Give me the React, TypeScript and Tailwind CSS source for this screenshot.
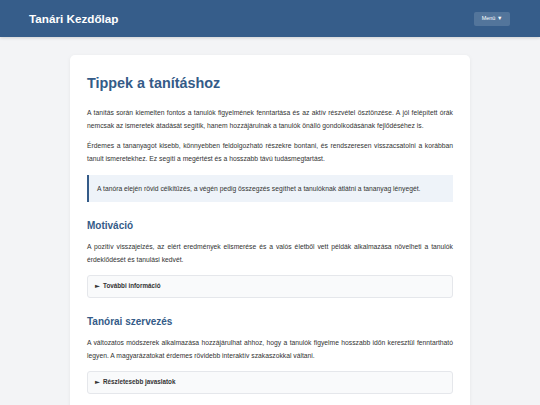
const paragraphs = [
  'A tanítás során kiemelten fontos a tanulók figyelmének fenntartása és az aktív részvétel ösztönzése. A jól felépített órák nemcsak az ismeretek átadását segítik, hanem hozzájárulnak a tanulók önálló gondolkodásának fejlődéséhez is.',
  'Érdemes a tananyagot kisebb, könnyebben feldolgozható részekre bontani, és rendszeresen visszacsatolni a korábban tanult ismeretekhez. Ez segíti a megértést és a hosszabb távú tudásmegtartást.',
]

const sections = [
  {
    title: 'Motiváció',
    text: 'A pozitív visszajelzés, az elért eredmények elismerése és a valós életből vett példák alkalmazása növelheti a tanulók érdeklődését és tanulási kedvét.',
    more: 'További információ',
  },
  {
    title: 'Tanórai szervezés',
    text: 'A változatos módszerek alkalmazása hozzájárulhat ahhoz, hogy a tanulók figyelme hosszabb időn keresztül fenntartható legyen. A magyarázatokat érdemes rövidebb interaktív szakaszokkal váltani.',
    more: 'Részletesebb javaslatok',
  },
]

function Summary({ label }: { label: string }) {
  return (
    <div className="mt-[8.5px] h-[23px] flex items-center gap-[3px] px-[7px] rounded-[3px] border border-[#e5e7eb] bg-[#f9fafb]">
      <span className="text-[6.5px] leading-none text-[#333] font-['DejaVu_Sans',sans-serif]">►</span>
      <span className="text-[6.3px] font-bold">{label}</span>
    </div>
  )
}

export default function App() {
  return (
    <div className="min-h-screen bg-[#f3f4f6] font-['Liberation_Sans',Arial,sans-serif] text-[#333]">
      <header className="h-[37px] bg-[#365d8a] flex items-center justify-between pl-[29px] pr-[30px] shadow-[0_1px_3px_rgba(0,0,0,0.15)]">
        <h1 className="text-white font-bold text-[11.7px]">Tanári Kezdőlap</h1>
        <button className="h-[14px] w-[36px] rounded-[2px] bg-white/15 text-white text-[5.5px] flex items-center justify-center">
          Menü ▼
        </button>
      </header>

      <main className="flex justify-center pt-[18px]">
        <article className="w-[400px] bg-white rounded-[5px] shadow-[0_1px_4px_rgba(0,0,0,0.06)] px-[17px] pt-[20px] pb-[20px]">
          <h2 className="text-[14.4px] leading-[17px] font-bold text-[#345b88]">
            Tippek a tanításhoz
          </h2>

          <div className="mt-[14px] space-y-[7px]">
            {paragraphs.map((p) => (
              <p key={p} className="text-[6.75px] leading-[13px] text-justify">
                {p}
              </p>
            ))}
          </div>

          <blockquote className="mt-[9.5px] border-l-2 border-[#345b88] bg-[#eef3f9] pl-[8px] pr-[8px] py-[7px] text-[6.75px] leading-[13px]">
            A tanóra elején rövid célkitűzés, a végén pedig összegzés segíthet a tanulóknak átlátni a tananyag lényegét.
          </blockquote>

          {sections.map((s) => (
            <section key={s.title} className="mt-[18px]">
              <h3 className="text-[10px] leading-[12px] font-bold text-[#345b88]">{s.title}</h3>
              <p className="mt-[8.5px] text-[6.75px] leading-[13px] text-justify">{s.text}</p>
              <Summary label={s.more} />
            </section>
          ))}
        </article>
      </main>
    </div>
  )
}
